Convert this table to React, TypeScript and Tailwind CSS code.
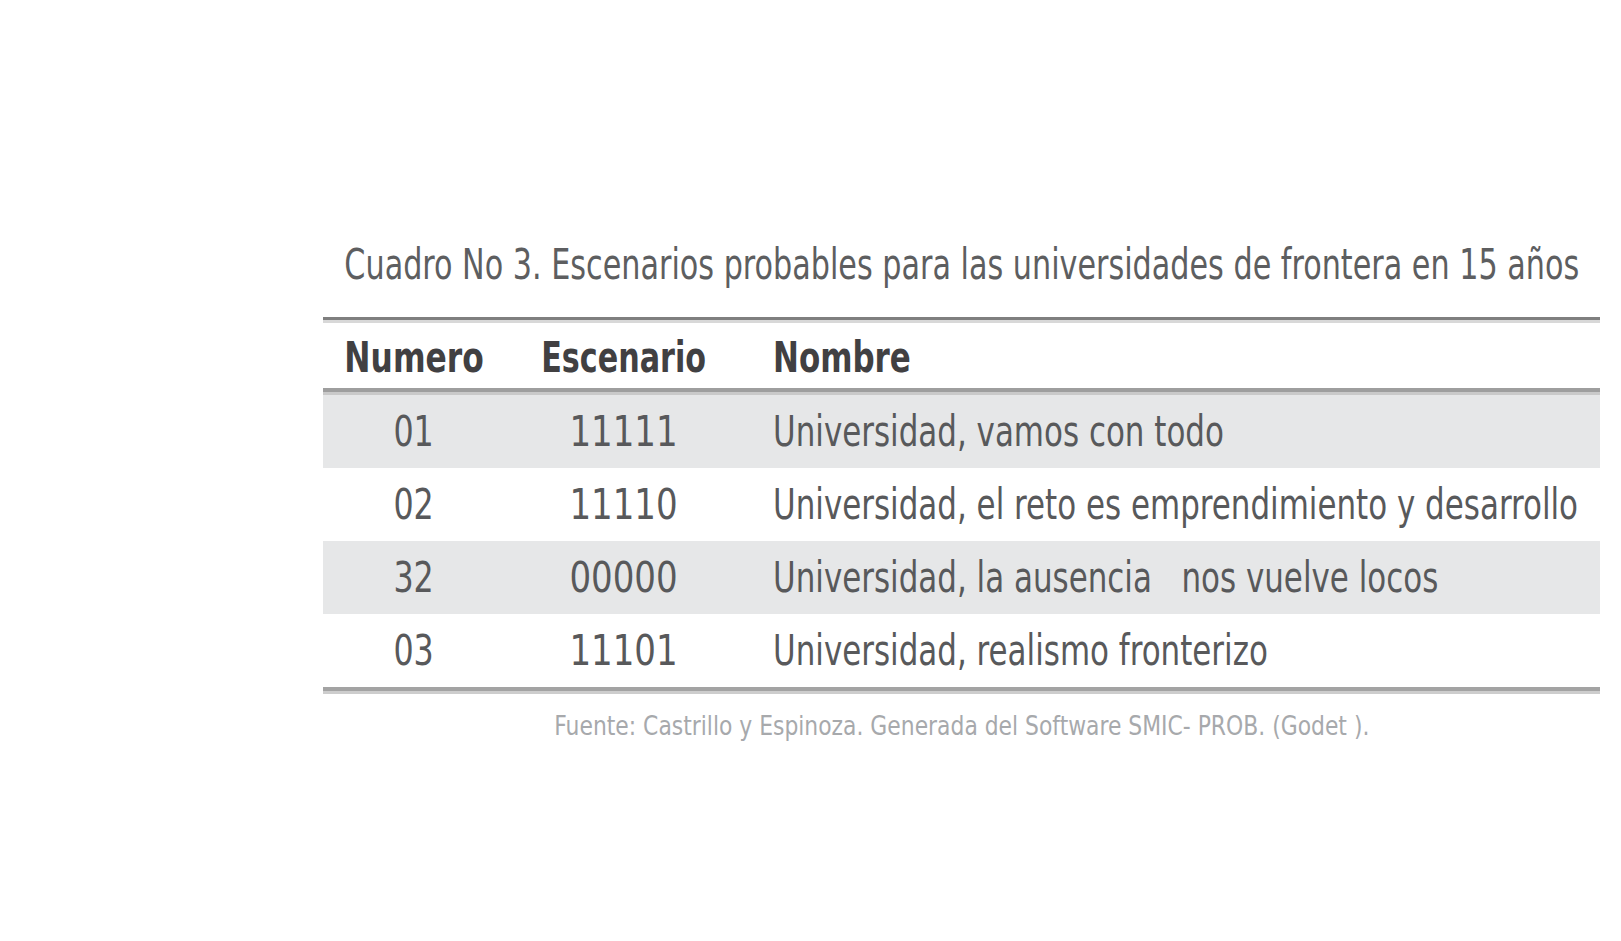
import React from "react";

const rows = [
  { n: "01", e: "11111", name: "Universidad, vamos con todo" },
  { n: "02", e: "11110", name: "Universidad, el reto es emprendimiento y desarrollo" },
  { n: "32", e: "00000", name: "Universidad, la ausencia \u00a0 nos vuelve locos" },
  { n: "03", e: "11101", name: "Universidad, realismo fronterizo" },
];

export default function App() {
  return (
    <div className="w-[1621px] h-[941px] overflow-hidden bg-white font-['Liberation_Sans_Narrow','DejaVu_Sans_Condensed','Liberation_Sans',sans-serif]">
      <div className="pl-[323px] pt-[241px]">
        <div className="w-[1277px]">
          <h1 className="flex justify-center text-[42px] leading-[48px] text-[#5d5e60]">
            <span className="inline-block shrink-0 whitespace-nowrap origin-center scale-x-[0.8]">
              Cuadro No 3. Escenarios probables para las universidades de frontera en 15 años
            </span>
          </h1>
          <div className="mt-[28px]">
            <div className="h-[3px] bg-[#7f7f7f]" />
            <div className="h-[3px] bg-[#d8d8d8]" />
            <div className="flex h-[65px] items-center pt-[4px] text-[43px] font-bold text-[#414042]">
              <div className="flex w-[182px] shrink-0 justify-center">
                <span className="inline-block shrink-0 whitespace-nowrap origin-center scale-x-[0.81]">Numero</span>
              </div>
              <div className="flex w-[237px] shrink-0 justify-center">
                <span className="inline-block shrink-0 whitespace-nowrap origin-center scale-x-[0.78]">Escenario</span>
              </div>
              <div className="shrink-0 pl-[31px]">
                <span className="inline-block whitespace-nowrap origin-left scale-x-[0.8]">Nombre</span>
              </div>
            </div>
            <div className="h-[4px] bg-[#9e9e9e]" />
            <div className="h-[3px] bg-[#c9c9c9]" />
            {rows.map((r, i) => (
              <div
                key={r.n}
                className={
                  "flex h-[73px] items-center text-[43px] text-[#58595b] " +
                  (i % 2 === 0 ? "bg-[#e6e7e8]" : "bg-white")
                }
              >
                <div className="flex w-[182px] shrink-0 justify-center">
                  <span className="inline-block shrink-0 whitespace-nowrap origin-center scale-x-[0.82]">{r.n}</span>
                </div>
                <div className="flex w-[237px] shrink-0 justify-center">
                  <span className="inline-block shrink-0 whitespace-nowrap origin-center scale-x-[0.88]">{r.e}</span>
                </div>
                <div className="shrink-0 pl-[31px]">
                  <span className="inline-block whitespace-nowrap origin-left scale-x-[0.8]">{r.name}</span>
                </div>
              </div>
            ))}
            <div className="h-[4px] bg-[#a3a3a3]" />
            <div className="h-[3px] bg-[#cdcdcd]" />
          </div>
          <p className="mt-[17px] flex justify-center text-[26px] leading-[30px] text-[#a7a9ac]">
            <span className="inline-block shrink-0 whitespace-nowrap origin-center scale-x-[0.935]">
              Fuente: Castrillo y Espinoza. Generada del Software SMIC- PROB. (Godet ).
            </span>
          </p>
        </div>
      </div>
    </div>
  );
}
